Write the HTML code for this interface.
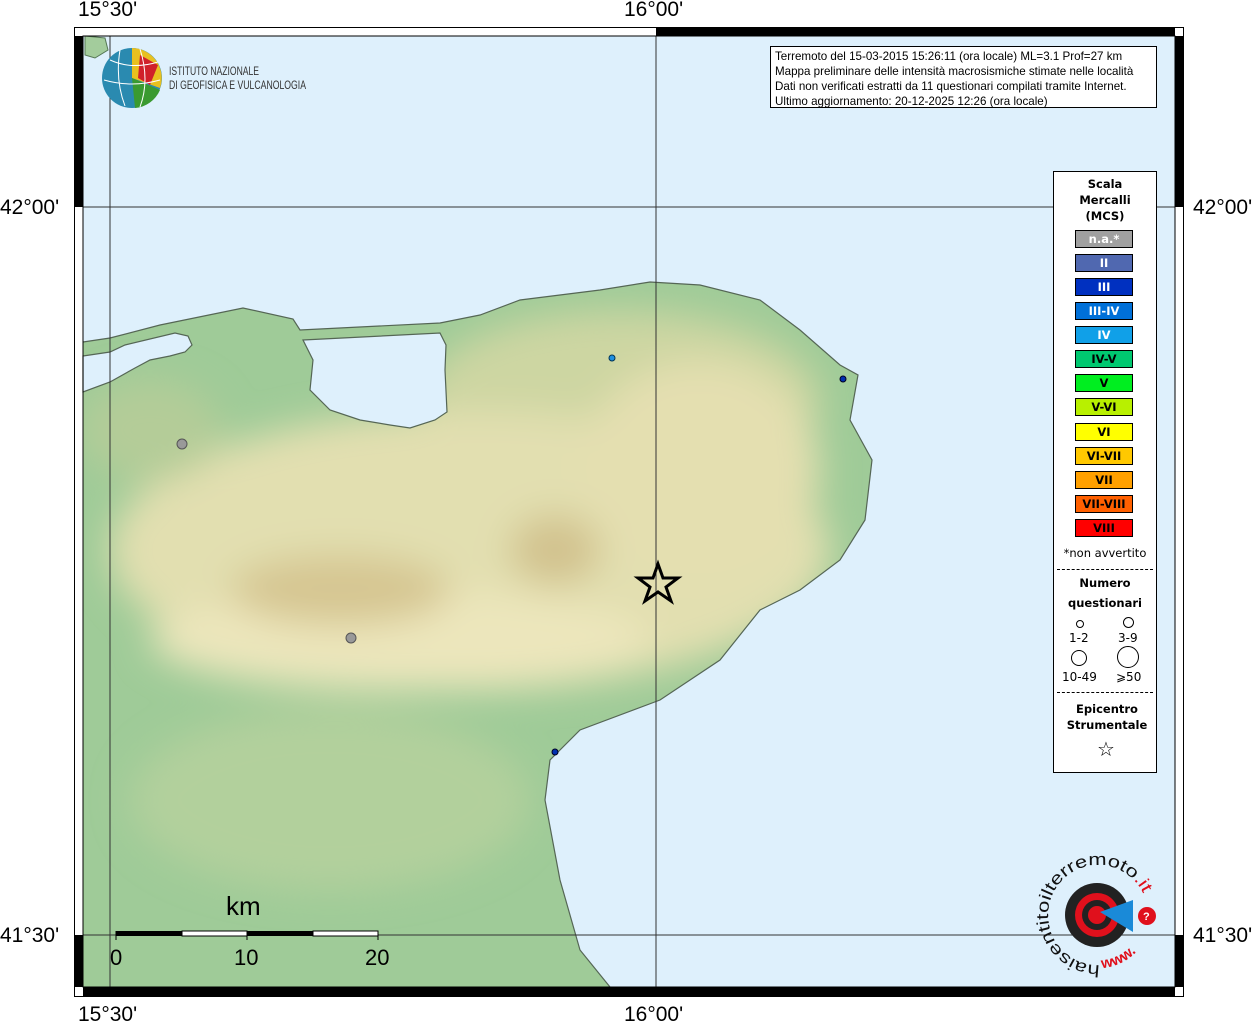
<!DOCTYPE html>
<html><head><meta charset="utf-8"><style>
body{margin:0;width:1257px;height:1024px;background:#fff;position:relative;overflow:hidden;font-family:"Liberation Sans",sans-serif}
.lab{position:absolute;font-size:21px;color:#000}
.leg{position:absolute;left:1053px;top:171px;width:102px;height:600px;background:#fff;border:1px solid #000;font-family:"DejaVu Sans",sans-serif;font-size:11.5px;text-align:center}
.sw{position:absolute;left:21px;width:56px;height:16px;border:1px solid #000;font-weight:bold;font-size:11.5px;line-height:16px;color:#fff}
</style></head><body>
<svg width="1257" height="1024" style="position:absolute;left:0;top:0">
<defs>
<filter id="bl"><feGaussianBlur stdDeviation="18"/></filter>
<clipPath id="land"><path d="M83,342 L110,338 L160,325 L243,308 L293,319 L300,330 L440,323 L480,315 L520,300 L600,290 L650,282 L700,285 L760,300 L800,330 L840,365 L858,375 L850,420 L872,460 L865,520 L840,560 L800,590 L760,610 L720,660 L660,700 L580,730 L550,760 L545,800 L560,880 L580,950 L610,987 L83,987 Z"/></clipPath>
</defs>
<rect x="83" y="36" width="1092" height="951" fill="#def0fc"/>
<g clip-path="url(#land)">
<rect x="83" y="36" width="1092" height="951" fill="#9fcb98"/>
<g filter="url(#bl)">
<ellipse cx="620" cy="400" rx="200" ry="90" fill="#cdd6a2"/>
<ellipse cx="470" cy="550" rx="360" ry="140" fill="#e2dfb0"/>
<ellipse cx="700" cy="470" rx="120" ry="110" fill="#e4dfb0"/>
<ellipse cx="400" cy="640" rx="250" ry="50" fill="#ece6bc"/>
<ellipse cx="340" cy="590" rx="110" ry="35" fill="#d6c692"/>
<ellipse cx="555" cy="550" rx="45" ry="35" fill="#d2c28e"/>
<ellipse cx="330" cy="800" rx="200" ry="90" fill="#b2d09c"/>
<ellipse cx="150" cy="430" rx="70" ry="50" fill="#b4cc98"/>
</g>
</g>
<path fill="none" stroke="#556655" stroke-width="1.2" d="M83,342 L110,338 L160,325 L243,308 L293,319 L300,330 L440,323 L480,315 L520,300 L600,290 L650,282 L700,285 L760,300 L800,330 L840,365 L858,375 L850,420 L872,460 L865,520 L840,560 L800,590 L760,610 L720,660 L660,700 L580,730 L550,760 L545,800 L560,880 L580,950 L610,987"/>
<path d="M83,356 L110,352 L125,345 L175,333 L188,336 L192,345 L185,352 L170,356 L150,360 L135,368 L110,382 L83,392 Z" fill="#def0fc" stroke="#556655" stroke-width="1.2"/>
<path d="M303,340 L440,333 L446,345 L445,370 L447,412 L435,420 L410,428 L390,425 L360,420 L330,410 L310,390 L313,360 Z" fill="#def0fc" stroke="#556655" stroke-width="1.2"/>
<path d="M85,36 L105,38 L108,50 L95,58 L85,55 Z" fill="#a3cc9c" stroke="#557755"/>
<line x1="110" y1="36" x2="110" y2="987" stroke="#333"/>
<line x1="656" y1="36" x2="656" y2="987" stroke="#333"/>
<line x1="83" y1="207" x2="1175" y2="207" stroke="#333"/>
<line x1="83" y1="935" x2="1175" y2="935" stroke="#333"/>
<rect x="74.5" y="27.5" width="1109" height="969" fill="none" stroke="#000"/>
<rect x="75" y="36" width="8" height="171" fill="#000"/>
<rect x="75" y="935" width="8" height="52" fill="#000"/>
<rect x="1175" y="36" width="8" height="171" fill="#000"/>
<rect x="1175" y="935" width="8" height="52" fill="#000"/>
<rect x="656" y="28" width="519" height="8" fill="#000"/>
<rect x="83" y="987" width="1092" height="9" fill="#000"/>
<rect x="83" y="36" width="1092" height="951" fill="none" stroke="#000"/>
<circle cx="182" cy="444" r="5" fill="#999" stroke="#555"/>
<circle cx="351" cy="638" r="5" fill="#999" stroke="#555"/>
<circle cx="612" cy="358" r="3" fill="#1e90e0" stroke="#035"/>
<circle cx="843" cy="379" r="3" fill="#0030b0" stroke="#002"/>
<circle cx="555" cy="752" r="3" fill="#0030b0" stroke="#002"/>
<path d="M658,564 L663,578 L678,578 L666,587 L671,601 L658,592 L645,601 L650,587 L638,578 L653,578 Z" fill="none" stroke="#000" stroke-width="3"/>
<rect x="116" y="931" width="66" height="5" fill="#000"/><rect x="182" y="931" width="65" height="5" fill="#fff" stroke="#000"/><rect x="247" y="931" width="66" height="5" fill="#000"/><rect x="313" y="931" width="65" height="5" fill="#fff" stroke="#000"/>
<line x1="116" y1="931" x2="116" y2="940" stroke="#000"/><line x1="247" y1="931" x2="247" y2="940" stroke="#000"/><line x1="378" y1="931" x2="378" y2="940" stroke="#000"/>
<text x="226" y="915" font-size="26" font-family="Liberation Sans">km</text>
<text x="110" y="965" font-size="22" font-family="Liberation Sans">0</text>
<text x="234" y="965" font-size="22" font-family="Liberation Sans">10</text>
<text x="365" y="965" font-size="22" font-family="Liberation Sans">20</text>
<circle cx="132" cy="78" r="30" fill="#2a8ab0"/>
<path d="M132,48 A30,30 0 0 1 160,88 L132,78 Z" fill="#e8c020"/>
<path d="M140,55 L158,65 L150,85 L138,78 Z" fill="#d0202a"/>
<path d="M132,78 L160,90 A30,30 0 0 1 135,108 Z" fill="#3a9a30"/>
<path d="M110,60 Q132,70 158,62 M104,80 Q132,88 160,80 M120,50 Q115,80 125,106 M140,49 Q150,80 140,107" stroke="#fff" fill="none" stroke-width="1"/>
<text x="169" y="75" font-size="12" font-family="Liberation Sans" fill="#333" textLength="90" lengthAdjust="spacingAndGlyphs">ISTITUTO NAZIONALE</text>
<text x="169" y="89" font-size="12" font-family="Liberation Sans" fill="#333" textLength="137" lengthAdjust="spacingAndGlyphs">DI GEOFISICA E VULCANOLOGIA</text>
<circle cx="1097" cy="915" r="32" fill="#222"/>
<circle cx="1097" cy="915" r="22" fill="#e0101c"/>
<circle cx="1097" cy="915" r="15" fill="#222"/>
<circle cx="1097" cy="915" r="9" fill="#e0101c"/>
<path d="M1100,912 L1133,900 L1133,932 Z" fill="#1a8ad8"/>
<circle cx="1147" cy="916" r="9" fill="#e0101c"/>
<text x="1143" y="920" font-size="11" fill="#fff" font-weight="bold">?</text>
<path id="arc" d="M1100,965 A50,50 0 1 1 1143,893" fill="none"/>
<text font-size="17" font-family="Liberation Sans" fill="#111"><textPath href="#arc" textLength="215" lengthAdjust="spacingAndGlyphs">haisentitoilterremoto<tspan fill="#e0101c">.it</tspan></textPath></text>
<path id="arc2" d="M1102,968 A53,53 0 0 0 1145,940" fill="none"/>
<text font-size="15" font-weight="bold" fill="#e0101c"><textPath href="#arc2">www.</textPath></text>
</svg>
<div class="lab" style="left:78px;top:-2px">15°30'</div>
<div class="lab" style="left:624px;top:-2px">16°00'</div>
<div class="lab" style="left:78px;top:1003px">15°30'</div>
<div class="lab" style="left:624px;top:1003px">16°00'</div>
<div class="lab" style="left:0px;top:196px">42°00'</div>
<div class="lab" style="left:1193px;top:196px">42°00'</div>
<div class="lab" style="left:0px;top:924px">41°30'</div>
<div class="lab" style="left:1193px;top:924px">41°30'</div>
<div style="position:absolute;left:770px;top:46px;width:387px;height:62px;background:#fff;border:1px solid #000;font-size:11.6px;line-height:15px;padding:2px 0 0 4px;box-sizing:border-box;white-space:nowrap;overflow:hidden">Terremoto del 15-03-2015 15:26:11 (ora locale) ML=3.1 Prof=27 km<br>Mappa preliminare delle intensità macrosismiche stimate nelle località<br>Dati non verificati estratti da 11 questionari compilati tramite Internet.<br>Ultimo aggiornamento: 20-12-2025 12:26 (ora locale)</div>
<div class="leg">
<div style="font-weight:bold;line-height:16px;margin-top:4px">Scala<br>Mercalli<br>(MCS)</div>
<div class="sw" style="top:58px;background:#a0a0a0">n.a.*</div>
<div class="sw" style="top:82px;background:#5068b0">II</div>
<div class="sw" style="top:106px;background:#0030c0">III</div>
<div class="sw" style="top:130px;background:#0070d8">III-IV</div>
<div class="sw" style="top:154px;background:#10a0e8">IV</div>
<div class="sw" style="top:178px;background:#00c870;color:#000">IV-V</div>
<div class="sw" style="top:202px;background:#00ee20;color:#000">V</div>
<div class="sw" style="top:226px;background:#b8f000;color:#000">V-VI</div>
<div class="sw" style="top:251px;background:#ffff00;color:#000">VI</div>
<div class="sw" style="top:275px;background:#ffc800;color:#000">VI-VII</div>
<div class="sw" style="top:299px;background:#ffa000;color:#000">VII</div>
<div class="sw" style="top:323px;background:#ff6000;color:#000">VII-VIII</div>
<div class="sw" style="top:347px;background:#ff0000;color:#000">VIII</div>
<div style="position:absolute;top:374px;left:0;width:102px;font-size:11.5px">*non avvertito</div>
<div style="position:absolute;top:397px;left:3px;width:96px;border-top:1px dashed #000"></div>
<div style="position:absolute;top:401px;width:102px;font-weight:bold;line-height:20px">Numero<br>questionari</div>
<div style="position:absolute;left:22px;top:448px;width:6px;height:6px;border:1px solid #000;border-radius:50%"></div>
<div style="position:absolute;left:69px;top:445px;width:9px;height:9px;border:1px solid #000;border-radius:50%"></div>
<div style="position:absolute;left:15px;top:459px;font-size:12px">1-2</div>
<div style="position:absolute;left:64px;top:459px;font-size:12px">3-9</div>
<div style="position:absolute;left:17px;top:478px;width:14px;height:14px;border:1px solid #000;border-radius:50%"></div>
<div style="position:absolute;left:63px;top:474px;width:20px;height:20px;border:1px solid #000;border-radius:50%"></div>
<div style="position:absolute;left:8px;top:498px;font-size:12px">10-49</div>
<div style="position:absolute;left:62px;top:498px;font-size:12px">⩾50</div>
<div style="position:absolute;top:520px;left:3px;width:96px;border-top:1px dashed #000"></div>
<div style="position:absolute;top:529px;left:2px;width:102px;font-weight:bold;line-height:16px">Epicentro<br>Strumentale</div>
<div style="position:absolute;top:565px;left:0;width:104px;font-size:20px">☆</div>
</div>
</body></html>
